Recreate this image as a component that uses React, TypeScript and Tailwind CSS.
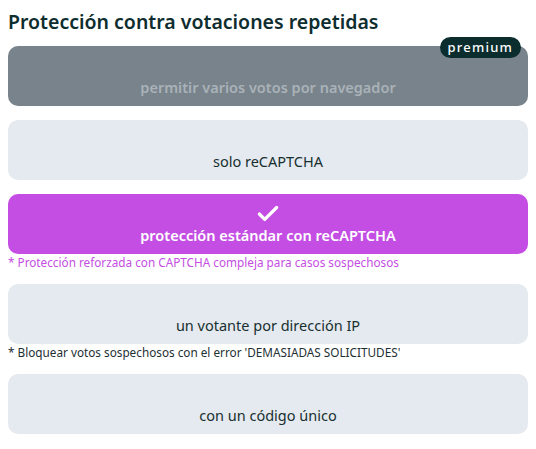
import { Check } from 'lucide-react';

type Opcion = {
  label: string;
  estado: 'premium' | 'normal' | 'activo';
  nota?: string;
  notaColor?: string;
};

const opciones: Opcion[] = [
  { label: 'permitir varios votos por navegador', estado: 'premium' },
  { label: 'solo reCAPTCHA', estado: 'normal' },
  {
    label: 'protección estándar con reCAPTCHA',
    estado: 'activo',
    nota: '* Protección reforzada con CAPTCHA compleja para casos sospechosos',
    notaColor: 'text-[#c44ee3]',
  },
  {
    label: 'un votante por dirección IP',
    estado: 'normal',
    nota: "* Bloquear votos sospechosos con el error 'DEMASIADAS SOLICITUDES'",
    notaColor: 'text-[#1d3033]',
  },
  { label: 'con un código único', estado: 'normal' },
];

export default function App() {
  return (
    <div className="w-[536px] h-[449px] bg-white px-2 pt-[8px] font-['Noto_Sans',sans-serif]">
      <h2 className="text-[19.5px] leading-[28px] font-semibold text-[#0e2d2f] mb-[10px]">
        Protección contra votaciones repetidas
      </h2>

      <div className="flex flex-col">
        {opciones.map((op) => (
          <div key={op.label} className="mb-[14px]">
            <div
              className={`relative h-[60px] rounded-[10px] flex flex-col items-center justify-end pb-[9px] text-[14.5px] leading-[20px] ${
                op.estado === 'premium'
                  ? 'bg-[#79838b] text-[#a9b2b8] font-semibold'
                  : op.estado === 'activo'
                  ? 'bg-[#c44ee3] text-white font-semibold'
                  : 'bg-[#e5e9f0] text-[#17302f]'
              }`}
            >
              {op.estado === 'activo' && (
                <Check className="w-[26px] h-[26px] -mb-[2px]" strokeWidth={3} />
              )}
              <span>{op.label}</span>
              {op.estado === 'premium' && (
                <span className="absolute right-[7px] top-[-9px] h-[21px] px-[8px] rounded-full bg-[#0b2d2e] text-white text-[13px] leading-[21px] font-medium tracking-[1.2px]">
                  premium
                </span>
              )}
            </div>
            {op.nota && (
              <p className={`text-[11.75px] leading-[16px] ${op.notaColor}`}>{op.nota}</p>
            )}
          </div>
        ))}
      </div>
    </div>
  );
}
